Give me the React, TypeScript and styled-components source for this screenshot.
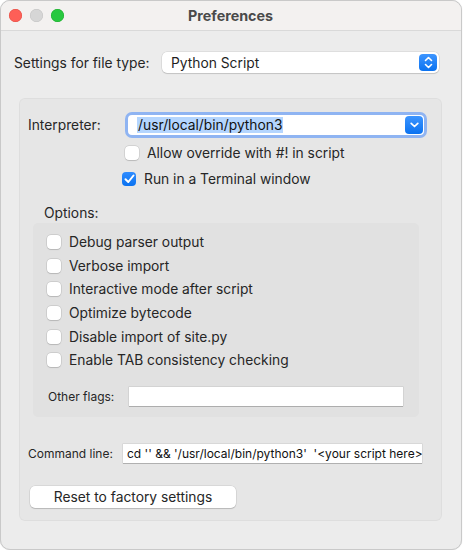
import React from "react";
import styled, { createGlobalStyle } from "styled-components";

const Global = createGlobalStyle`
  html, body { margin: 0; padding: 0; background: #ffffff; }
  body { font-family: Inter, "Noto Sans", "Liberation Sans", sans-serif; -webkit-font-smoothing: antialiased; }
  * { box-sizing: border-box; }
`;

const FS = 13.8;

const Window = styled.div`
  width: 462px;
  height: 550px;
  border-radius: 10px;
  border: 1px solid #c9c9c9;
  background: #ececec;
  overflow: hidden;
  display: flex;
  flex-direction: column;
  box-shadow: 0 0 1px rgba(0,0,0,0.2);
`;

const TitleBar = styled.div`
  position: relative;
  height: 30px;
  flex: none;
  background: #f3f1f0;
  border-bottom: 1px solid #d9d9d9;
  display: flex;
  align-items: center;
  justify-content: center;
`;

const Lights = styled.div`
  position: absolute;
  left: 8px;
  top: 8px;
  display: flex;
  gap: 8px;
`;

const Light = styled.span<{ $c: string; $b: string }>`
  width: 13px;
  height: 13px;
  border-radius: 50%;
  background: ${(p) => p.$c};
  box-shadow: inset 0 0 0 0.5px ${(p) => p.$b};
`;

const Title = styled.div`
  font-size: 14.3px;
  font-weight: 700;
  color: #4a4a4a;
  margin-right: 1px;
`;

const Content = styled.div`
  flex: 1;
  padding: 21px 19px 0 13px;
  display: flex;
  flex-direction: column;
`;

const Row = styled.div`
  display: flex;
  align-items: center;
`;

const Label = styled.span<{ $size?: number; $w?: number }>`
  font-size: ${(p) => p.$size ?? FS}px;
  color: #262626;
  white-space: nowrap;
  ${(p) => (p.$w ? `width: ${p.$w}px; flex: none;` : "")}
`;

const Popup = styled.div`
  width: 277px;
  height: 21px;
  background: #ffffff;
  border-radius: 5px;
  box-shadow: 0 0 0 0.5px rgba(0,0,0,0.12), 0 1px 1px rgba(0,0,0,0.12);
  display: flex;
  align-items: center;
  justify-content: space-between;
  padding: 0 2px 0 9px;
  font-size: ${FS}px;
  color: #1f1f1f;
`;

const BlueKnob = styled.span<{ $w: number; $h: number }>`
  width: ${(p) => p.$w}px;
  height: ${(p) => p.$h}px;
  border-radius: 4px;
  background: linear-gradient(#3d95ff, #0a72f0);
  display: flex;
  align-items: center;
  justify-content: center;
  flex: none;
`;

const Group = styled.div`
  margin-top: 25px;
  margin-left: 5px;
  height: 423px;
  background: #e6e6e6;
  border-radius: 6px;
  box-shadow: inset 0 0 0 1px rgba(0,0,0,0.03);
  padding: 14px 14px 0 9px;
  display: flex;
  flex-direction: column;
`;

const Combo = styled.div`
  width: 302px;
  height: 26px;
  border-radius: 7px;
  background: #ffffff;
  border: 3px solid #8fb4f2;
  display: flex;
  align-items: center;
  justify-content: space-between;
  padding: 0 1px 0 9px;
`;

const Selected = styled.span`
  background: #b4d5fe;
  color: #111;
  font-size: ${FS}px;
  line-height: 16px;
  padding: 0 1px;
`;

const CheckRow = styled.label<{ $indent: number; $top: number }>`
  display: flex;
  align-items: center;
  gap: 8px;
  margin-left: ${(p) => p.$indent}px;
  margin-top: ${(p) => p.$top}px;
  font-size: ${FS}px;
  color: #262626;
  height: 16px;
`;

const Box = styled.span<{ $on?: boolean }>`
  width: 14px;
  height: 14px;
  border-radius: 4px;
  flex: none;
  background: ${(p) => (p.$on ? "linear-gradient(#2f8cff, #0a72f0)" : "#ffffff")};
  box-shadow: ${(p) =>
    p.$on ? "none" : "0 0 0 0.5px rgba(0,0,0,0.15), 0 0.5px 1px rgba(0,0,0,0.12)"};
  display: flex;
  align-items: center;
  justify-content: center;
`;

const OptionsTitle = styled.div`
  margin-top: 18px;
  margin-left: 16px;
  font-size: ${FS}px;
  color: #262626;
`;

const OptionsBox = styled.div`
  margin-top: 2px;
  margin-left: 5px;
  width: 386px;
  height: 194px;
  background: #e1e1e1;
  border-radius: 5px;
  padding: 11px 0 0 14px;
  display: flex;
  flex-direction: column;
  gap: 7.7px;
`;

const Option = styled.label`
  display: flex;
  align-items: center;
  gap: 8px;
  height: 16px;
  font-size: ${FS}px;
  color: #262626;
`;

const Field = styled.div<{ $w: number }>`
  width: ${(p) => p.$w}px;
  height: 19px;
  background: #ffffff;
  box-shadow: 0 0 0 0.5px rgba(0,0,0,0.12), 0 1px 0 rgba(0,0,0,0.18);
  font-size: 12px;
  color: #111;
  display: flex;
  align-items: center;
  padding-left: 4px;
  white-space: nowrap;
  overflow: hidden;
`;

const FlagsRow = styled(Row)`
  margin-top: 11px;
  margin-left: 1px;
`;

const CommandRow = styled(Row)`
  margin-top: 27px;
`;

const ResetButton = styled.button`
  margin-top: 23px;
  margin-left: 2px;
  width: 206px;
  height: 22px;
  border: none;
  border-radius: 5px;
  background: #ffffff;
  box-shadow: 0 0 0 0.5px rgba(0,0,0,0.12), 0 1px 1px rgba(0,0,0,0.15);
  font-family: inherit;
  font-size: ${FS}px;
  color: #262626;
  padding: 0;
`;

const Check = () => (
  <svg width="11" height="10" viewBox="0 0 11 10">
    <path d="M1.5 5.2 L4.3 8 L9.5 1.5" fill="none" stroke="#fff" strokeWidth="2" strokeLinecap="round" strokeLinejoin="round" />
  </svg>
);

const Stepper = () => (
  <svg width="9" height="13" viewBox="0 0 9 13">
    <path d="M1.5 4.5 L4.5 1.5 L7.5 4.5 M1.5 8.5 L4.5 11.5 L7.5 8.5" fill="none" stroke="#fff" strokeWidth="1.6" strokeLinecap="round" strokeLinejoin="round" />
  </svg>
);

const Chevron = () => (
  <svg width="9" height="6" viewBox="0 0 9 6">
    <path d="M1.2 1.3 L4.5 4.5 L7.8 1.3" fill="none" stroke="#fff" strokeWidth="1.7" strokeLinecap="round" strokeLinejoin="round" />
  </svg>
);

const options = [
  "Debug parser output",
  "Verbose import",
  "Interactive mode after script",
  "Optimize bytecode",
  "Disable import of site.py",
  "Enable TAB consistency checking",
];

export default function App() {
  return (
    <>
      <Global />
      <Window>
        <TitleBar>
          <Lights>
            <Light $c="#fe5f57" $b="#e24b41" />
            <Light $c="#d6d6d6" $b="#c2c2c2" />
            <Light $c="#28c840" $b="#1aab29" />
          </Lights>
          <Title>Preferences</Title>
        </TitleBar>
        <Content>
          <Row>
            <Label $w={148}>Settings for file type:</Label>
            <Popup>
              <span>Python Script</span>
              <BlueKnob $w={18} $h={17}>
                <Stepper />
              </BlueKnob>
            </Popup>
          </Row>
          <Group>
            <Row>
              <Label $w={97}>Interpreter:</Label>
              <Combo>
                <Selected>/usr/local/bin/python3</Selected>
                <BlueKnob $w={18} $h={18}>
                  <Chevron />
                </BlueKnob>
              </Combo>
            </Row>
            <CheckRow $indent={97} $top={7}>
              <Box />
              <span>Allow override with #! in script</span>
            </CheckRow>
            <CheckRow $indent={94} $top={10}>
              <Box $on>
                <Check />
              </Box>
              <span>Run in a Terminal window</span>
            </CheckRow>
            <OptionsTitle>Options:</OptionsTitle>
            <OptionsBox>
              {options.map((o) => (
                <Option key={o}>
                  <Box />
                  <span>{o}</span>
                </Option>
              ))}
              <FlagsRow>
                <Label $size={12} $w={81}>Other flags:</Label>
                <Field $w={274} />
              </FlagsRow>
            </OptionsBox>
            <CommandRow>
              <Label $size={12} $w={95}>Command line:</Label>
              <Field $w={299}>cd '' &amp;&amp; '/usr/local/bin/python3'&nbsp; '&lt;your script here&gt;</Field>
            </CommandRow>
            <ResetButton>Reset to factory settings</ResetButton>
          </Group>
        </Content>
      </Window>
    </>
  );
}
